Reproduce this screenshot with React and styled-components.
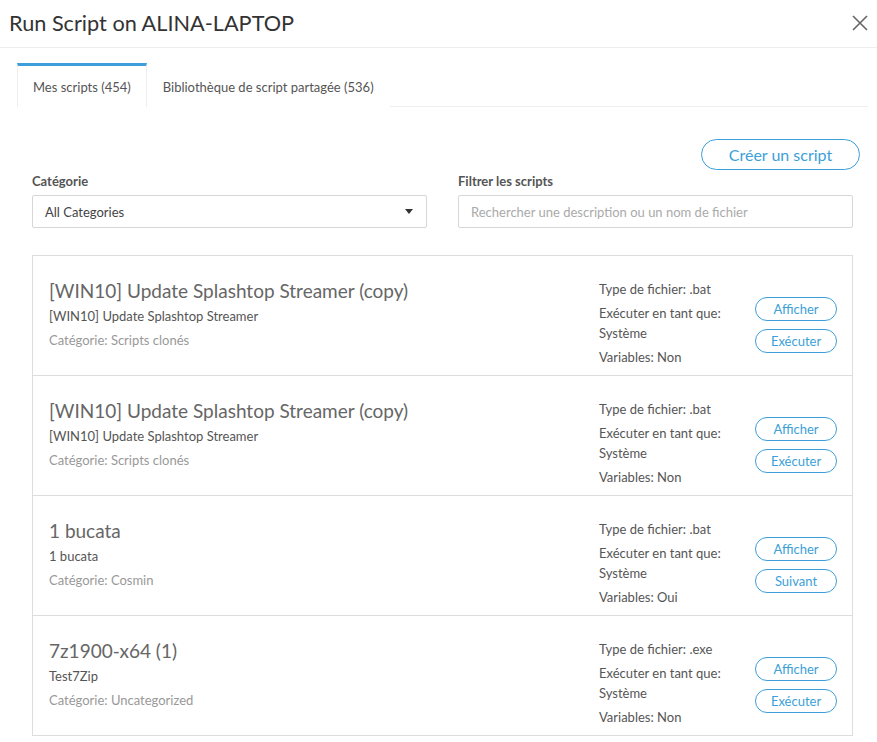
import React from "react";
import styled, { createGlobalStyle } from "styled-components";

const Global = createGlobalStyle`
  html, body { margin: 0; padding: 0; background: #fff; }
  body { font-family: Lato, "Open Sans", sans-serif; color: #555; }
  * { box-sizing: border-box; }
`;

const BLUE = "#3c9fd9";

const Modal = styled.div`
  width: 877px;
  min-height: 742px;
  background: #fff;
`;

const Header = styled.div`
  height: 48px;
  display: flex;
  align-items: center;
  justify-content: space-between;
  padding: 0 8px 2px 9px;
  border-bottom: 1px solid #eeeeee;
`;

const Title = styled.h1`
  margin: 0;
  font-size: 21.7px;
  font-weight: 400;
  color: #333;
`;

const Close = styled.button`
  border: none;
  background: none;
  padding: 0;
  width: 18px;
  height: 18px;
  display: flex;
  color: #666;
  cursor: pointer;
`;

const Body = styled.div`
  padding: 15px 9px 0 17px;
`;

const TabBar = styled.div`
  display: flex;
  border-bottom: 1px solid #eeeeee;
  height: 44px;
`;

const Tab = styled.div`
  padding: 0 15px;
  display: flex;
  align-items: center;
  font-size: 13px;
  color: #555;
  margin-bottom: -1px;
  background: #fff;
  border-top: 3px solid ${(p) => (p.$active ? BLUE : "transparent")};
  border-left: 1px solid ${(p) => (p.$active ? "#eeeeee" : "transparent")};
  border-right: 1px solid ${(p) => (p.$active ? "#eeeeee" : "transparent")};
`;

const Content = styled.div`
  padding: 0 15px;
`;

const TopRow = styled.div`
  display: flex;
  justify-content: flex-end;
  padding-top: 32px;
  margin-right: -7px;
`;

const PillButton = styled.button`
  font-family: inherit;
  background: #fff;
  color: ${BLUE};
  border: 1px solid ${BLUE};
  border-radius: 999px;
  font-size: ${(p) => (p.$large ? "16px" : "13px")};
  height: ${(p) => (p.$large ? "31px" : "24px")};
  width: ${(p) => (p.$large ? "159px" : "82px")};
  padding: 0;
  cursor: pointer;
`;

const Filters = styled.div`
  display: grid;
  grid-template-columns: 1fr 1fr;
  column-gap: 31px;
  margin-top: 2px;
`;

const Field = styled.div`
  display: flex;
  flex-direction: column;
`;

const Label = styled.label`
  font-size: 13px;
  font-weight: 700;
  color: #555;
  line-height: 18px;
  margin-bottom: 5px;
`;

const SelectBox = styled.div`
  height: 33px;
  border: 1px solid #d6d6d6;
  border-radius: 2px;
  display: flex;
  align-items: center;
  justify-content: space-between;
  padding: 0 13px 0 12px;
  font-size: 13px;
  color: #444;
`;

const Caret = styled.span`
  width: 0;
  height: 0;
  border-left: 4px solid transparent;
  border-right: 4px solid transparent;
  border-top: 5px solid #333;
`;

const SearchInput = styled.input`
  height: 33px;
  border: 1px solid #d6d6d6;
  border-radius: 2px;
  padding: 0 12px;
  font-family: inherit;
  font-size: 13px;
  color: #444;
  outline: none;
  &::placeholder { color: #aaa; }
`;

const List = styled.div`
  margin-top: 27px;
  border: 1px solid #dddddd;
  border-top: none;
`;

const Row = styled.div`
  height: 120px;
  display: flex;
  padding: 24px 15px 0 16px;
  border-top: 1px solid #dddddd;
`;

const Info = styled.div`
  flex: 1;
  display: flex;
  flex-direction: column;
  margin-top: -1px;
`;

const ScriptName = styled.div`
  font-size: 19px;
  line-height: 24px;
  color: #666;
`;

const Desc = styled.div`
  font-size: 13px;
  line-height: 20px;
  color: #555;
  margin-top: 3px;
`;

const Cat = styled.div`
  font-size: 13px;
  line-height: 20px;
  color: #999;
  margin-top: 4px;
`;

const Meta = styled.div`
  width: 156px;
  font-size: 13px;
  color: #555;
  display: flex;
  flex-direction: column;
  gap: 4px;
  margin-top: -1px;
`;

const MetaLine = styled.div`
  line-height: 20px;
  width: 130px;
`;

const Actions = styled.div`
  display: flex;
  flex-direction: column;
  gap: 8px;
  padding-top: 17px;
  width: 82px;
`;

const scripts = [
  { name: "[WIN10] Update Splashtop Streamer (copy)", desc: "[WIN10] Update Splashtop Streamer", cat: "Scripts clonés", type: ".bat", vars: "Non", action: "Exécuter" },
  { name: "[WIN10] Update Splashtop Streamer (copy)", desc: "[WIN10] Update Splashtop Streamer", cat: "Scripts clonés", type: ".bat", vars: "Non", action: "Exécuter" },
  { name: "1 bucata", desc: "1 bucata", cat: "Cosmin", type: ".bat", vars: "Oui", action: "Suivant" },
  { name: "7z1900-x64 (1)", desc: "Test7Zip", cat: "Uncategorized", type: ".exe", vars: "Non", action: "Exécuter" },
];

export default function App() {
  return (
    <>
      <Global />
      <Modal>
        <Header>
          <Title>Run Script on ALINA-LAPTOP</Title>
          <Close aria-label="close">
            <svg width="18" height="18" viewBox="0 0 18 18" fill="none" stroke="currentColor" strokeWidth="1.6">
              <path d="M2 2 L16 16 M16 2 L2 16" />
            </svg>
          </Close>
        </Header>
        <Body>
          <TabBar>
            <Tab $active>Mes scripts (454)</Tab>
            <Tab>Bibliothèque de script partagée (536)</Tab>
          </TabBar>
          <Content>
            <TopRow>
              <PillButton $large>Créer un script</PillButton>
            </TopRow>
            <Filters>
              <Field>
                <Label>Catégorie</Label>
                <SelectBox>
                  <span>All Categories</span>
                  <Caret />
                </SelectBox>
              </Field>
              <Field>
                <Label>Filtrer les scripts</Label>
                <SearchInput placeholder="Rechercher une description ou un nom de fichier" />
              </Field>
            </Filters>
            <List>
              {scripts.map((s, i) => (
                <Row key={i}>
                  <Info>
                    <ScriptName>{s.name}</ScriptName>
                    <Desc>{s.desc}</Desc>
                    <Cat>Catégorie: {s.cat}</Cat>
                  </Info>
                  <Meta>
                    <MetaLine>Type de fichier: {s.type}</MetaLine>
                    <MetaLine>Exécuter en tant que: Système</MetaLine>
                    <MetaLine>Variables: {s.vars}</MetaLine>
                  </Meta>
                  <Actions>
                    <PillButton>Afficher</PillButton>
                    <PillButton>{s.action}</PillButton>
                  </Actions>
                </Row>
              ))}
            </List>
          </Content>
        </Body>
      </Modal>
    </>
  );
}
